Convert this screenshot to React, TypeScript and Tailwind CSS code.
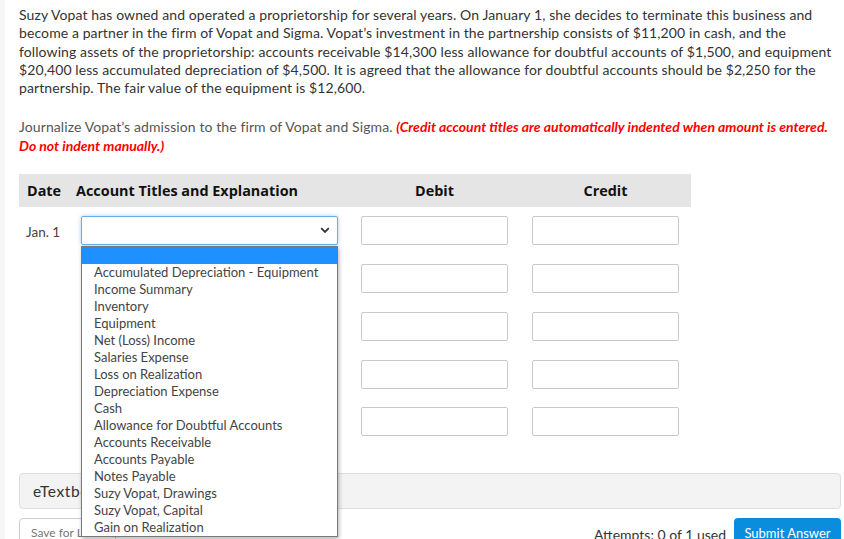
import React from "react";

const options = [
  "Accumulated Depreciation - Equipment",
  "Income Summary",
  "Inventory",
  "Equipment",
  "Net (Loss) Income",
  "Salaries Expense",
  "Loss on Realization",
  "Depreciation Expense",
  "Cash",
  "Allowance for Doubtful Accounts",
  "Accounts Receivable",
  "Accounts Payable",
  "Notes Payable",
  "Suzy Vopat, Drawings",
  "Suzy Vopat, Capital",
  "Gain on Realization",
];

function AmountInput() {
  return <div className="w-[147px] h-[29px] border border-[#c9c9c9] rounded-[2px] bg-white" />;
}

export default function App() {
  const rows = [0, 1, 2, 3, 4];
  return (
    <div className="w-[844px] h-[539px] overflow-hidden bg-white flex" style={{ fontFamily: "Lato, 'Open Sans', sans-serif" }}>
      <div className="w-[5px] shrink-0 bg-[#f6f6f6]" />
      <div className="flex-1 pl-[14px] pr-[3px] pt-[6px] relative">
        <p className="text-[14px] leading-[18.3px] text-[#333] tracking-[0.1px]">
          Suzy Vopat has owned and operated a proprietorship for several years. On January 1, she decides to terminate this business and become a partner in the firm of Vopat and Sigma. Vopat’s investment in the partnership consists of $11,200 in cash, and the following assets of the proprietorship: accounts receivable $14,300 less allowance for doubtful accounts of $1,500, and equipment $20,400 less accumulated depreciation of $4,500. It is agreed that the allowance for doubtful accounts should be $2,250 for the partnership. The fair value of the equipment is $12,600.
        </p>
        <p className="mt-[21px] text-[14px] leading-[18.5px] text-[#555]">
          <span className="tracking-[0.1px]">Journalize Vopat’s admission to the firm of Vopat and Sigma.</span>{" "}
          <span className="text-[#ff0000] font-bold italic">
            (Credit account titles are automatically indented when amount is entered. Do not indent manually.)
          </span>
        </p>

        <div className="mt-[19px] w-[672px]">
          <div
            className="grid grid-cols-[57px_273px_171px_171px] h-[33px] items-center bg-[#e5e5e5] text-[14.4px] font-bold text-[#111]"
            style={{ fontFamily: "'Open Sans', sans-serif" }}
          >
            <div className="pl-[8px]">Date</div>
            <div>Account Titles and Explanation</div>
            <div className="text-center pl-[12px] pr-[12px]">Debit</div>
            <div className="text-center pl-[12px] pr-[12px]">Credit</div>
          </div>
          <div className="pt-[9px]">
            {rows.map((r) => (
              <div key={r} className="grid grid-cols-[57px_273px_171px_171px] h-[47.75px] items-start">
                <div className="pl-[7px] h-[29px] flex items-center text-[13.5px] text-[#444] pt-[2px]">{r === 0 ? "Jan. 1" : ""}</div>
                <div className="pl-[5px]">
                  {r === 0 ? (
                    <div className="w-[257px] h-[29px] border border-[#66afe9] rounded-[2px] bg-white shadow-[0_0_4px_rgba(102,175,233,0.6)] flex items-center justify-end pr-[7px]">
                      <svg width="10" height="7" viewBox="0 0 10 7">
                        <path d="M1.2 1.2 L5 5 L8.8 1.2" fill="none" stroke="#333" strokeWidth="1.8" />
                      </svg>
                    </div>
                  ) : null}
                </div>
                <div className="pl-[12px]">
                  <AmountInput />
                </div>
                <div className="pl-[12px]">
                  <AmountInput />
                </div>
              </div>
            ))}
          </div>
        </div>

        <div className="mt-[18px] h-[36px] border border-[#ddd] rounded-[4px] bg-[#f3f3f3] flex items-center pl-[13px] text-[15.5px] text-[#333] tracking-[0.6px]">
          eTextbook and Media
        </div>

        <div className="mt-[9px] flex items-start justify-between">
          <div className="h-[30px] px-[11px] border border-[#ccc] rounded-[4px] bg-white flex items-center text-[12px] text-[#777]">
            Save for Later
          </div>
          <div className="flex items-start gap-[8px]">
            <div className="pt-[6px] text-[14px] text-[#333]">Attempts: 0 of 1 used</div>
            <div className="h-[32px] w-[107px] rounded-[4px] bg-[#0b8ddd] text-white text-[13px] flex items-center justify-center">
              Submit Answer
            </div>
          </div>
        </div>

        <div className="absolute left-[76px] top-[246px] w-[257px] border border-[#7a7a7a] bg-white shadow-[1px_2px_4px_rgba(0,0,0,0.3)] text-[13px] text-[#444]">
          <div className="h-[17px] bg-[#1e90ff]" />
          {options.map((o) => (
            <div key={o} className="h-[17px] leading-[17px] pl-[12px] whitespace-nowrap">
              {o}
            </div>
          ))}
        </div>
      </div>
    </div>
  );
}
